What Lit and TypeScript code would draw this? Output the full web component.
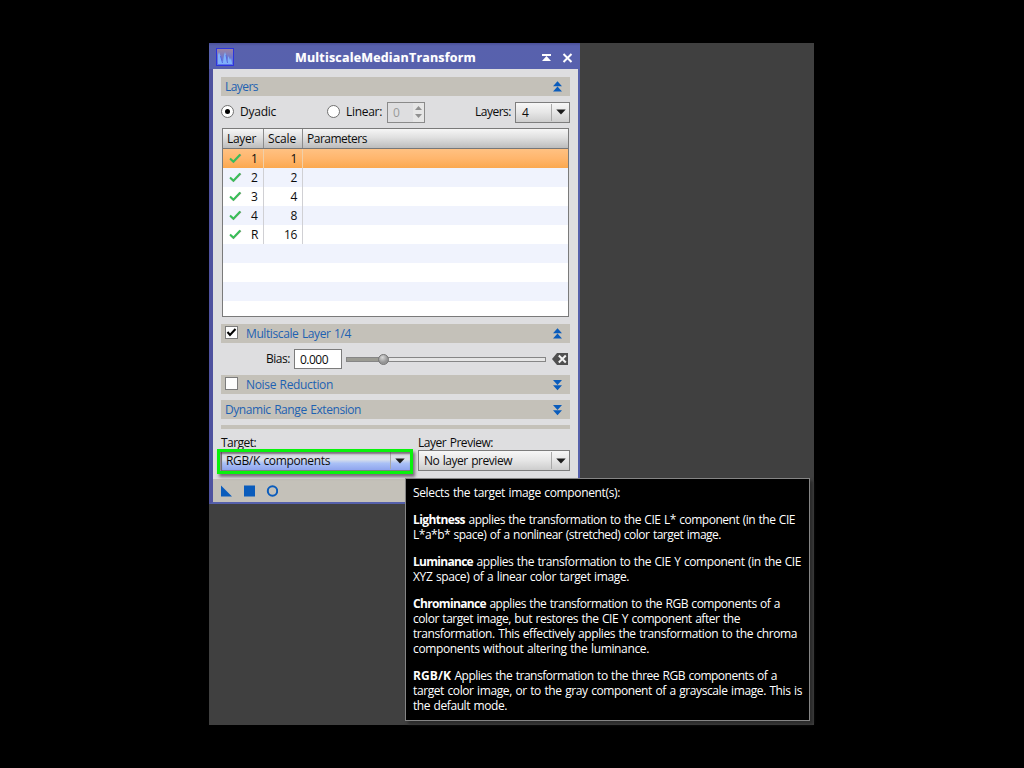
import { LitElement, html, css, svg } from "lit";
import { customElement, property } from "lit/decorators.js";
import { styleMap } from "lit/directives/style-map.js";

const ctx = document.createElement("canvas").getContext("2d")!;
const FAMILY = '"Open Sans", "Noto Sans", sans-serif';
const WORD_GAP = 0.8;

/** A single run of text tracked so that it takes up a given width. */
@customElement("tracked-text")
class TrackedText extends LitElement {
  @property() text = "";
  @property({ type: Number }) w = 0;
  @property({ type: Number }) size = 12;
  @property({ type: Number }) weight = 400;
  static styles = css`
    :host { display: inline-block; vertical-align: top; white-space: pre; }
    .run { display: block; font-family: "Open Sans", "Noto Sans", sans-serif; word-spacing: 0.8px; }
  `;
  render() {
    ctx.font = `${this.weight} ${this.size}px ${FAMILY}`;
    const gaps = this.text.split(" ").length - 1;
    const natural = ctx.measureText(this.text).width + gaps * WORD_GAP;
    const spacing = this.w ? (this.w - natural) / this.text.length : 0;
    return html`<span class="run" style=${styleMap({
      fontSize: `${this.size}px`,
      fontWeight: `${this.weight}`,
      letterSpacing: `${spacing.toFixed(3)}px`,
    })}>${this.text}</span>`;
  }
}

const t = (text: string, w = 0, weight = 400, size = 12) =>
  html`<tracked-text .text=${text} .w=${w} .weight=${weight} .size=${size}></tracked-text>`;

const chevrons = (down: boolean) => html`<svg class="chev" width="11" height="12" viewBox="0 0 11 12">
  ${down
    ? svg`<path fill="#0a5cbc" d="M1 1h9L5.5 6zM1 6.2h9L5.5 11.2z"/>`
    : svg`<path fill="#0a5cbc" d="M1 5.3h9L5.5 .3zM1 10.5h9L5.5 5.5z"/>`}
</svg>`;

const check = html`<svg class="tick" width="13" height="11" viewBox="0 0 13 11">
  <path d="M1.5 6.2L4.5 9.2L11.8 1.8" fill="none" stroke="#8d9a86" stroke-width="1.6"/>
  <path d="M1 5.6L4.4 8.6L11.2 1.4" fill="none" stroke="#38bf58" stroke-width="2"/>
</svg>`;

const arrow = html`<svg width="10" height="6" viewBox="0 0 10 6"><path fill="#1c1c1c" d="M.3.5h9.4L5 5.6z"/></svg>`;

const ROWS: [string, string][] = [
  ["1", "1"], ["2", "2"], ["3", "4"], ["4", "8"], ["R", "16"],
];

const TIP: [string, number, string, number][][] = [
  [["", 0, "Selects the target image component(s):", 207]],
  [["Lightness", 52, " applies the transformation to the CIE L* component (in the CIE", 330],
   ["", 0, "L*a*b* space) of a nonlinear (stretched) color target image.", 308]],
  [["Luminance", 60, " applies the transformation to the CIE Y component (in the CIE", 328],
   ["", 0, "XYZ space) of a linear color target image.", 216]],
  [["Chrominance", 73, " applies the transformation to the RGB components of a", 294],
   ["", 0, "color target image, but restores the CIE Y component after the", 327],
   ["", 0, "transformation. This effectively applies the transformation to the chroma", 384],
   ["", 0, "components without altering the luminance.", 236]],
  [["RGB/K", 38, " Applies the transformation to the three RGB components of a", 326],
   ["", 0, "target color image, or to the gray component of a grayscale image. This is", 389],
   ["", 0, "the default mode.", 94]],
];

@customElement("app-root")
class AppRoot extends LitElement {
  static styles = css`
    :host { display: block; width: 1024px; height: 768px; background: #000; overflow: hidden; color: #0c0c0c; font: 12px/16px "Open Sans", "Noto Sans", sans-serif; }
    * { box-sizing: border-box; }
    svg { display: block; flex: none; }
    .page { height: 768px; padding: 43px 210px 43px 209px; }
    .desk { position: relative; height: 682px; background: #404040; }
    .window { width: 371px; height: 461px; border: solid #5560ab; border-width: 0 2px 2px 4px; border-left: 4px solid #4f529f; background: #dedee0; }
    .title { display: flex; align-items: center; height: 26px; margin: 0 -2px 0 -4px; padding: 2px 7px 0 7px; background: linear-gradient(#4a4f98, #5861ad 3px, #5761ad); color: #fff; }
    .title .name { flex: 1; padding: 2px 0 0 61px; text-shadow: 0 0 1px #fff6; line-height: 20px; }
    .title .btns { display: flex; gap: 10px; padding-top: 1px; }
    .content { padding: 8px 8px 0; }
    .bar { display: flex; align-items: center; height: 19px; padding: 0 7px 0 4px; background: #c4c1b9; color: #1e62b2; }
    .bar .chev { margin-left: auto; }
    .bar .box { margin: -2px 8px 0 0; }
    .box { width: 13px; height: 13px; border: 1px solid #7c7c7c; background: #fdfdfd; }
    .row { display: flex; align-items: center; height: 32px; }
    .radio { width: 13px; height: 13px; margin: -1px 6px 0 0; border: 1px solid #707070; border-radius: 50%; background: #fff; display: grid; place-items: center; }
    .radio.second { margin-left: 51px; }
    .radio .dot { width: 5px; height: 5px; border-radius: 50%; background: #000; }
    .spin { display: flex; width: 38px; height: 21px; margin-left: 5px; border: 1px solid #8a8a8a; color: #9a9a9a; background: #dedee0; }
    .spin .val { width: 25px; padding-left: 5px; line-height: 20px; }
    .spin .step { flex: 1; display: grid; align-content: space-evenly; justify-items: center; background: #e6e6e6; }
    .fill { flex: 1; }
    .combo { display: flex; align-items: center; height: 21px; padding-left: 5px; border: 1px solid #7d7d7d; background: linear-gradient(#f7f7f7, #e6e6e6 50%, #cdcdcd); }
    .combo .drop { display: grid; place-items: center; width: 18px; height: 17px; margin-left: auto; border-left: 1px solid #a9a9a9; }
    .combo.layers { width: 55px; margin-left: 4px; padding-left: 6px; line-height: 17px; }
    .table { width: 347px; height: 189px; margin-left: 1px; border: 1px solid #7a7a7a; background: #fff; overflow: hidden; }
    .thead { display: flex; height: 20px; border-bottom: 1px solid #777; background: linear-gradient(#f6f6f6, #e0e0e0 45%, #bcbcbc); line-height: 19px; }
    .thead .h { border-right: 1px solid #8c8c8c; padding-left: 4px; }
    .c1 { width: 41px; }
    .c2 { width: 39px; }
    .thead .h.c3 { flex: 1; border: 0; }
    .tr { display: flex; height: 19px; background: #fff; line-height: 19px; }
    .tr:nth-child(even) { background: #f0f3fd; }
    .tr.sel { background: linear-gradient(#ffc182, #ffb66d 50%, #fba84f); }
    .tr .c { border-right: 1px solid #d0d0d4; display: flex; align-items: center; justify-content: space-between; padding: 0 5px 0 6px; }
    .tr.sel .c { border-color: #f0cfa8; }
    .tr .c.c2 { justify-content: flex-end; }
    .gap7 { margin-top: 7px; }
    .gap6 { margin-top: 6px; }
    .bias { padding-left: 45px; }
    .num { width: 48px; height: 20px; margin-left: 4px; padding-left: 5px; border: 1px solid #7c7c7c; background: #fff; line-height: 20px; }
    .slider { margin-left: 4px; }
    .clear { margin-left: 6px; }
    .sep { height: 4px; margin-top: 6px; background: #c4c1b9; }
    .pair { display: grid; grid-template-columns: 192px 152px; column-gap: 5px; }
    .lbl { height: 21px; padding-top: 6px; line-height: 16px; }
    .combo.target { padding: 0 4px; background: linear-gradient(#d9dcdf, #d8dfea 45%, #a9c0f6 65%, #8fa5ee); }
    .foot { display: flex; align-items: center; gap: 11px; height: 23px; margin-top: 8px; padding-left: 8px; background: #c4c1b9; }
    .mark { position: absolute; left: 8px; top: 406px; width: 196px; height: 25px; border: 3px solid #08f20c; box-shadow: 2px 3px 3px #4c354cb0, inset 1px 2px 2px #4c354caa; }
    .tip { position: absolute; left: 196px; top: 435px; width: 405px; height: 243px; padding: 6px 7px; border: 1px solid #858585; background: #000; color: #fff; box-shadow: 3px 3px 3px #2a2a2a; line-height: 15px; }
    .tip .para { margin-bottom: 12px; }
    .tip .line { height: 15px; white-space: nowrap; display: flex; }
  `;

  render() {
    return html`<div class="page"><div class="desk">
      <div class="window">
        <div class="title">
          <svg width="18" height="18" viewBox="0 0 18 18">
            <defs><linearGradient id="g" x2="0" y2="1"><stop offset="0" stop-color="#a086a0"/><stop offset=".5" stop-color="#7078c8"/><stop offset="1" stop-color="#5b74ee"/></linearGradient></defs>
            <rect x=".5" y=".5" width="17" height="17" fill="url(#g)" stroke="#2c35dd"/>
            <path d="M2 16V7l1-3 1.500 4 1 4 1.500 2 1-7 1-3 1 3 1 7 1.500-6 1.500 4 1-2 1 5v1z" fill="#7fb0fa"/>
            <path d="M4.500 8l2 7M10 7l1.500 8" stroke="#5566e0" fill="none"/>
          </svg>
          <span class="name">${t("MultiscaleMedianTransform", 181, 700, 12.5)}</span>
          <span class="btns">
            <svg width="11" height="12" viewBox="0 0 11 12"><path fill="#fff" d="M1 2h9v2H1zM5.500 4l4.500 5H1z"/></svg>
            <svg width="11" height="12" viewBox="0 0 11 12"><path d="M1.500 2l8 8M9.500 2l-8 8" stroke="#fff" stroke-width="2"/></svg>
          </span>
        </div>
        <div class="content">
          <div class="bar">${t("Layers", 33)}${chevrons(false)}</div>
          <div class="row">
            <span class="radio"><span class="dot"></span></span>${t("Dyadic", 36)}
            <span class="radio second"></span>${t("Linear:", 36)}
            <span class="spin"><span class="val">${t("0", 7)}</span><span class="step">
              <svg width="7" height="4" viewBox="0 0 7 4"><path fill="#909090" d="M0 4h7L3.500 0z"/></svg>
              <svg width="7" height="4" viewBox="0 0 7 4"><path fill="#909090" d="M0 0h7L3.500 4z"/></svg>
            </span></span>
            <span class="fill"></span>${t("Layers:", 36)}
            <span class="combo layers">${t("4", 7)}<span class="drop">${arrow}</span></span>
          </div>
          <div class="table">
            <div class="thead"><span class="h c1">${t("Layer", 29)}</span><span class="h c2">${t("Scale", 28)}</span><span class="h c3">${t("Parameters", 60)}</span></div>
            <div class="body">
            ${ROWS.map(([a, s], i) => html`<div class="tr ${i === 0 ? "sel" : ""}">
              <span class="c c1">${check}${t(a, 7)}</span><span class="c c2">${t(s, s.length * 6.5)}</span></div>`)}
            ${[5, 6, 7, 8].map(() => html`<div class="tr"></div>`)}
            </div>
          </div>
          <div class="bar gap7"><span class="box"><svg width="11" height="11" viewBox="0 0 11 11"><path d="M1.500 5L4 8L9.500 2" fill="none" stroke="#000" stroke-width="2"/></svg></span>${t("Multiscale Layer 1/4", 105)}${chevrons(false)}</div>
          <div class="row bias">${t("Bias:", 24)}<span class="num">${t("0.000", 28)}</span>
            <svg class="slider" width="200" height="13" viewBox="0 0 200 13">
              <defs><radialGradient id="k" cx=".4" cy=".3"><stop offset="0" stop-color="#d8d8d8"/><stop offset="1" stop-color="#969696"/></radialGradient></defs>
              <rect x=".5" y="4.500" width="199" height="4" fill="#e6e6e6" stroke="#868686"/>
              <rect x="1" y="5" width="36" height="3" fill="#9b9b93"/>
              <circle cx="37.500" cy="6.500" r="5" fill="url(#k)" stroke="#777"/>
            </svg>
            <svg class="clear" width="16" height="12" viewBox="0 0 16 12"><path fill="#505050" d="M5 0h11v12H5L0 6z"/><path d="M6.800 2.500l7 7M13.800 2.500l-7 7" stroke="#f2f2f2" stroke-width="2"/></svg>
          </div>
          <div class="bar"><span class="box"></span>${t("Noise Reduction", 87)}${chevrons(true)}</div>
          <div class="bar gap6">${t("Dynamic Range Extension", 136)}${chevrons(true)}</div>
          <div class="sep"></div>
          <div class="pair">
            <span class="lbl">${t("Target:", 35)}</span><span class="lbl">${t("Layer Preview:", 75)}</span>
            <span class="combo target">${t("RGB/K components", 104)}<span class="drop">${arrow}</span></span>
            <span class="combo">${t("No layer preview", 88)}<span class="drop">${arrow}</span></span>
          </div>
        </div>
        <div class="foot">
          <svg width="12" height="12" viewBox="0 0 12 12"><path fill="#0a5cbc" d="M0 .5v11h11z"/></svg>
          <svg width="11" height="12" viewBox="0 0 11 12"><rect y=".5" width="11" height="11" fill="#0a5cbc"/></svg>
          <svg width="12" height="12" viewBox="0 0 12 12"><circle cx="6.500" cy="6" r="4.700" fill="none" stroke="#0a5cbc" stroke-width="2"/></svg>
        </div>
      </div>
      <div class="mark"></div>
      <div class="tip">${TIP.map((p) => html`<div class="para">${p.map(([b, bw, s, w]) => html`<div class="line">${b ? t(b, bw, 700) : ""}${t(s, w)}</div>`)}</div>`)}</div>
    </div></div>`;
  }
}
